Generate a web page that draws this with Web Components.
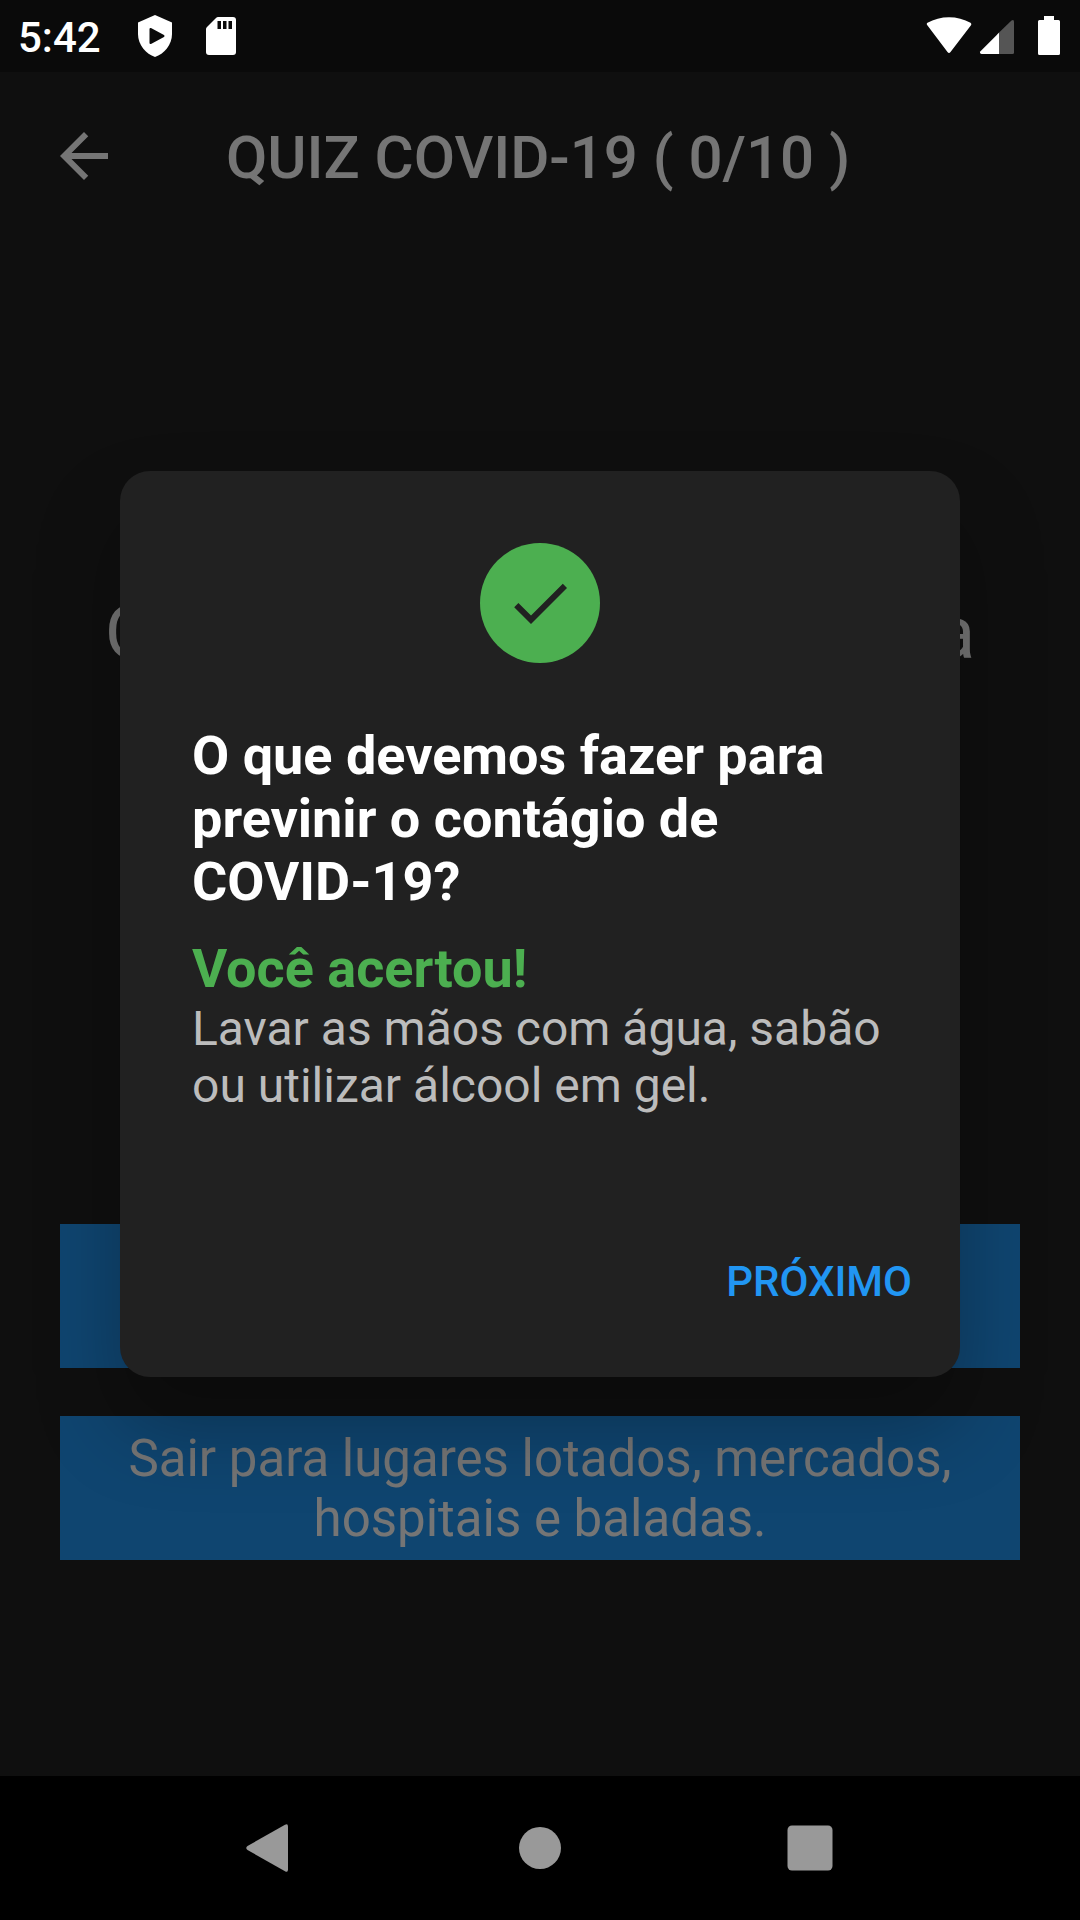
<!DOCTYPE html>
<html lang="pt-BR">
<head>
<meta charset="utf-8">
<meta name="viewport" content="width=device-width, initial-scale=1">
<title>Quiz COVID-19</title>
<style>
  html, body { margin: 0; height: 100%; background: #000; }
  body { font-family: Roboto, "Noto Sans", sans-serif; color: #fff; }
</style>
</head>
<body>
<quiz-app></quiz-app>

<script>
const define = (name, html) => {
  const template = document.createElement('template');
  template.innerHTML = html;
  customElements.define(name, class extends HTMLElement {
    constructor() {
      super();
      this.attachShadow({ mode: 'open' }).append(template.content.cloneNode(true));
    }
  });
};

define('status-bar', `
  <style>
    :host { display: flex; align-items: center; justify-content: space-between; height: 72px; padding: 0 19px 0 18px; background: #0a0a0a; box-sizing: border-box; }
    div { display: flex; align-items: center; }
    time { font-size: 42px; font-weight: 500; line-height: 48px; margin-right: 36px; padding-top: 3px; }
    .left svg + svg { margin-left: 32px; }
    .right { gap: 6px; }
    .right svg:last-child { margin-left: 16px; }
    svg { display: block; }
  </style>
  <div class="left">
    <time>5:42</time>
    <svg width="36" height="44" viewBox="0 0 36 44" aria-hidden="true">
      <path fill="#fff" d="M18 1L35 8.500V20C35 31 27 40 18 43C9 40 1 31 1 20V8.500Z"/>
      <path fill="#0a0a0a" stroke="#0a0a0a" stroke-width="2" stroke-linejoin="round" d="M13.500 15V29L26.500 22Z"/>
    </svg>
    <svg width="32" height="40" viewBox="0 0 32 40" aria-hidden="true">
      <path fill="#fff" d="M13 1H28Q31 1 31 4V36Q31 39 28 39H4Q1 39 1 36V13Q1 12 2 11L11 2Q12 1 13 1Z"/>
      <path fill="#0a0a0a" d="M12.500 5h3.500v8h-3.500zM18 5h3.500v8H18zM23.500 5H27v8h-3.500z"/>
    </svg>
  </div>
  <div class="right">
    <svg width="48" height="40" viewBox="0 0 48 40" aria-hidden="true">
      <path fill="#fff" d="M2.500 9.500Q1 8 2.500 6.800C15-.7 33-.7 45.500 6.800Q47 8 45.800 9.500L25.500 36Q24 38 22.500 36Z"/>
    </svg>
    <svg width="36" height="40" viewBox="0 0 36 40" aria-hidden="true">
      <path fill="#555" d="M32.500 4.500Q35 2.800 35 6V36.500Q35 38 33.500 38H18V18.500Z"/>
      <path fill="#fff" d="M20 16.800V38H2.500Q0 37.500 1.500 35.300Z"/>
    </svg>
    <svg width="24" height="40" viewBox="0 0 24 40" aria-hidden="true">
      <path fill="#fff" d="M7 0h10v4h4.500Q23 4 23 5.500v32Q23 39 21.500 39h-19Q1 39 1 37.500v-32Q1 4 2.500 4H7z"/>
    </svg>
  </div>`);

define('app-header', `
  <style>
    :host { display: grid; grid-template-columns: 168px 1fr 172px; align-items: center; height: 168px; }
    button { justify-self: center; padding: 0; border: 0; background: none; color: inherit; }
    svg { display: block; width: 72px; height: 72px; fill: currentColor; }
    h1 { margin: 0; padding-top: 4px; font-size: 60px; font-weight: 500; line-height: 70px; text-align: center; white-space: nowrap; }
  </style>
  <button type="button" aria-label="Voltar">
    <svg viewBox="0 0 24 24" aria-hidden="true"><path d="M20 11H7.830l5.590-5.590L12 4l-8 8 8 8 1.410-1.410L7.830 13H20v-2z"/></svg>
  </button>
  <h1><slot></slot></h1>`);

define('quiz-option', `
  <style>
    :host { display: block; }
    button { display: block; width: 100%; min-height: 144px; padding: 13px 48px 11px; border: 0; background: #2196f3; color: inherit; font: inherit; font-size: 51px; line-height: 60px; text-align: center; }
  </style>
  <button type="button"><slot></slot></button>`);

define('quiz-page', `
  <style>
    :host { display: flex; flex-direction: column; background: #212121; }
    section { flex: 1; display: flex; flex-direction: column; padding: 0 60px 216px; }
    h2 { flex: 1; display: flex; align-items: center; justify-content: center; margin: 0; padding-bottom: 24px; font-size: 75px; font-weight: 400; line-height: 88px; text-align: center; }
    .options { display: flex; flex-direction: column; gap: 48px; }
  </style>
  <app-header>QUIZ COVID-19 ( 0/10 )</app-header>
  <section>
    <h2>O que devemos fazer para previnir o contágio de COVID-19?</h2>
    <div class="options">
      <quiz-option>Lavar as mãos com água, sabão ou utilizar álcool em gel.</quiz-option>
      <quiz-option>Sair para lugares lotados, mercados, hospitais e baladas.</quiz-option>
    </div>
  </section>`);

define('result-dialog', `
  <style>
    :host { display: block; box-sizing: border-box; padding: 72px 24px 42px; border-radius: 30px; background: #212121; box-shadow: 0 48px 84px rgba(0, 0, 0, .28); }
    .badge { display: grid; place-items: center; width: 120px; height: 120px; margin: 0 auto 61px; border-radius: 50%; background: #4caf50; }
    svg { width: 72px; height: 72px; fill: #212121; }
    .content { padding: 0 48px; }
    h2, h3 { margin: 0; font-size: 54px; font-weight: 700; line-height: 63px; }
    h3 { margin-top: 24px; color: #4caf50; }
    p { margin: 0; color: #bcbcbc; font-size: 48px; line-height: 57px; }
    footer { display: flex; justify-content: flex-end; margin-top: 113px; }
    button { height: 108px; padding: 0 24px; border: 0; background: none; color: #2196f3; font: inherit; font-size: 42px; font-weight: 500; }
  </style>
  <div class="badge">
    <svg viewBox="0 0 24 24" aria-hidden="true"><path d="M9 16.200L4.800 12l-1.400 1.400L9 19 21 7l-1.400-1.400L9 16.200z"/></svg>
  </div>
  <div class="content">
    <h2><slot name="question"></slot></h2>
    <h3><slot name="verdict"></slot></h3>
    <p><slot></slot></p>
  </div>
  <footer><button type="button"><slot name="action"></slot></button></footer>`);

define('modal-layer', `
  <style>
    :host { display: grid; align-items: center; padding: 0 120px; background: rgba(0, 0, 0, .54); }
  </style>
  <slot></slot>`);

define('nav-bar', `
  <style>
    :host { display: flex; height: 144px; padding: 0 12.5%; background: #000; box-sizing: border-box; }
    button { flex: 1; display: grid; place-items: center; padding: 0; border: 0; background: none; }
    svg { width: 48px; height: 48px; fill: #999; }
  </style>
  <button type="button" aria-label="Voltar">
    <svg viewBox="0 0 48 48" aria-hidden="true"><path d="M39 .8Q42-.8 42 2.500V45.500Q42 48.800 39 47.200L1.500 26Q-1 24 1.500 22Z"/></svg>
  </button>
  <button type="button" aria-label="Início">
    <svg viewBox="0 0 48 48" aria-hidden="true"><circle cx="24" cy="24" r="21"/></svg>
  </button>
  <button type="button" aria-label="Recentes">
    <svg viewBox="0 0 48 48" aria-hidden="true"><rect x="1.500" y="1.500" width="45" height="45" rx="4.500"/></svg>
  </button>`);

define('quiz-app', `
  <style>
    :host { display: flex; flex-direction: column; min-height: 100vh; }
    main { flex: 1; position: relative; display: flex; flex-direction: column; overflow: hidden; }
    quiz-page { flex: 1; }
    modal-layer { position: absolute; inset: 0; }
  </style>
  <status-bar></status-bar>
  <main>
    <quiz-page></quiz-page>
    <modal-layer>
      <result-dialog role="dialog" aria-modal="true">
        <span slot="question">O que devemos fazer para previnir o contágio de COVID-19?</span>
        <span slot="verdict">Você acertou!</span>
        Lavar as mãos com água, sabão ou utilizar álcool em gel.
        <span slot="action">PRÓXIMO</span>
      </result-dialog>
    </modal-layer>
  </main>
  <nav-bar></nav-bar>`);
</script>
</body>
</html>
